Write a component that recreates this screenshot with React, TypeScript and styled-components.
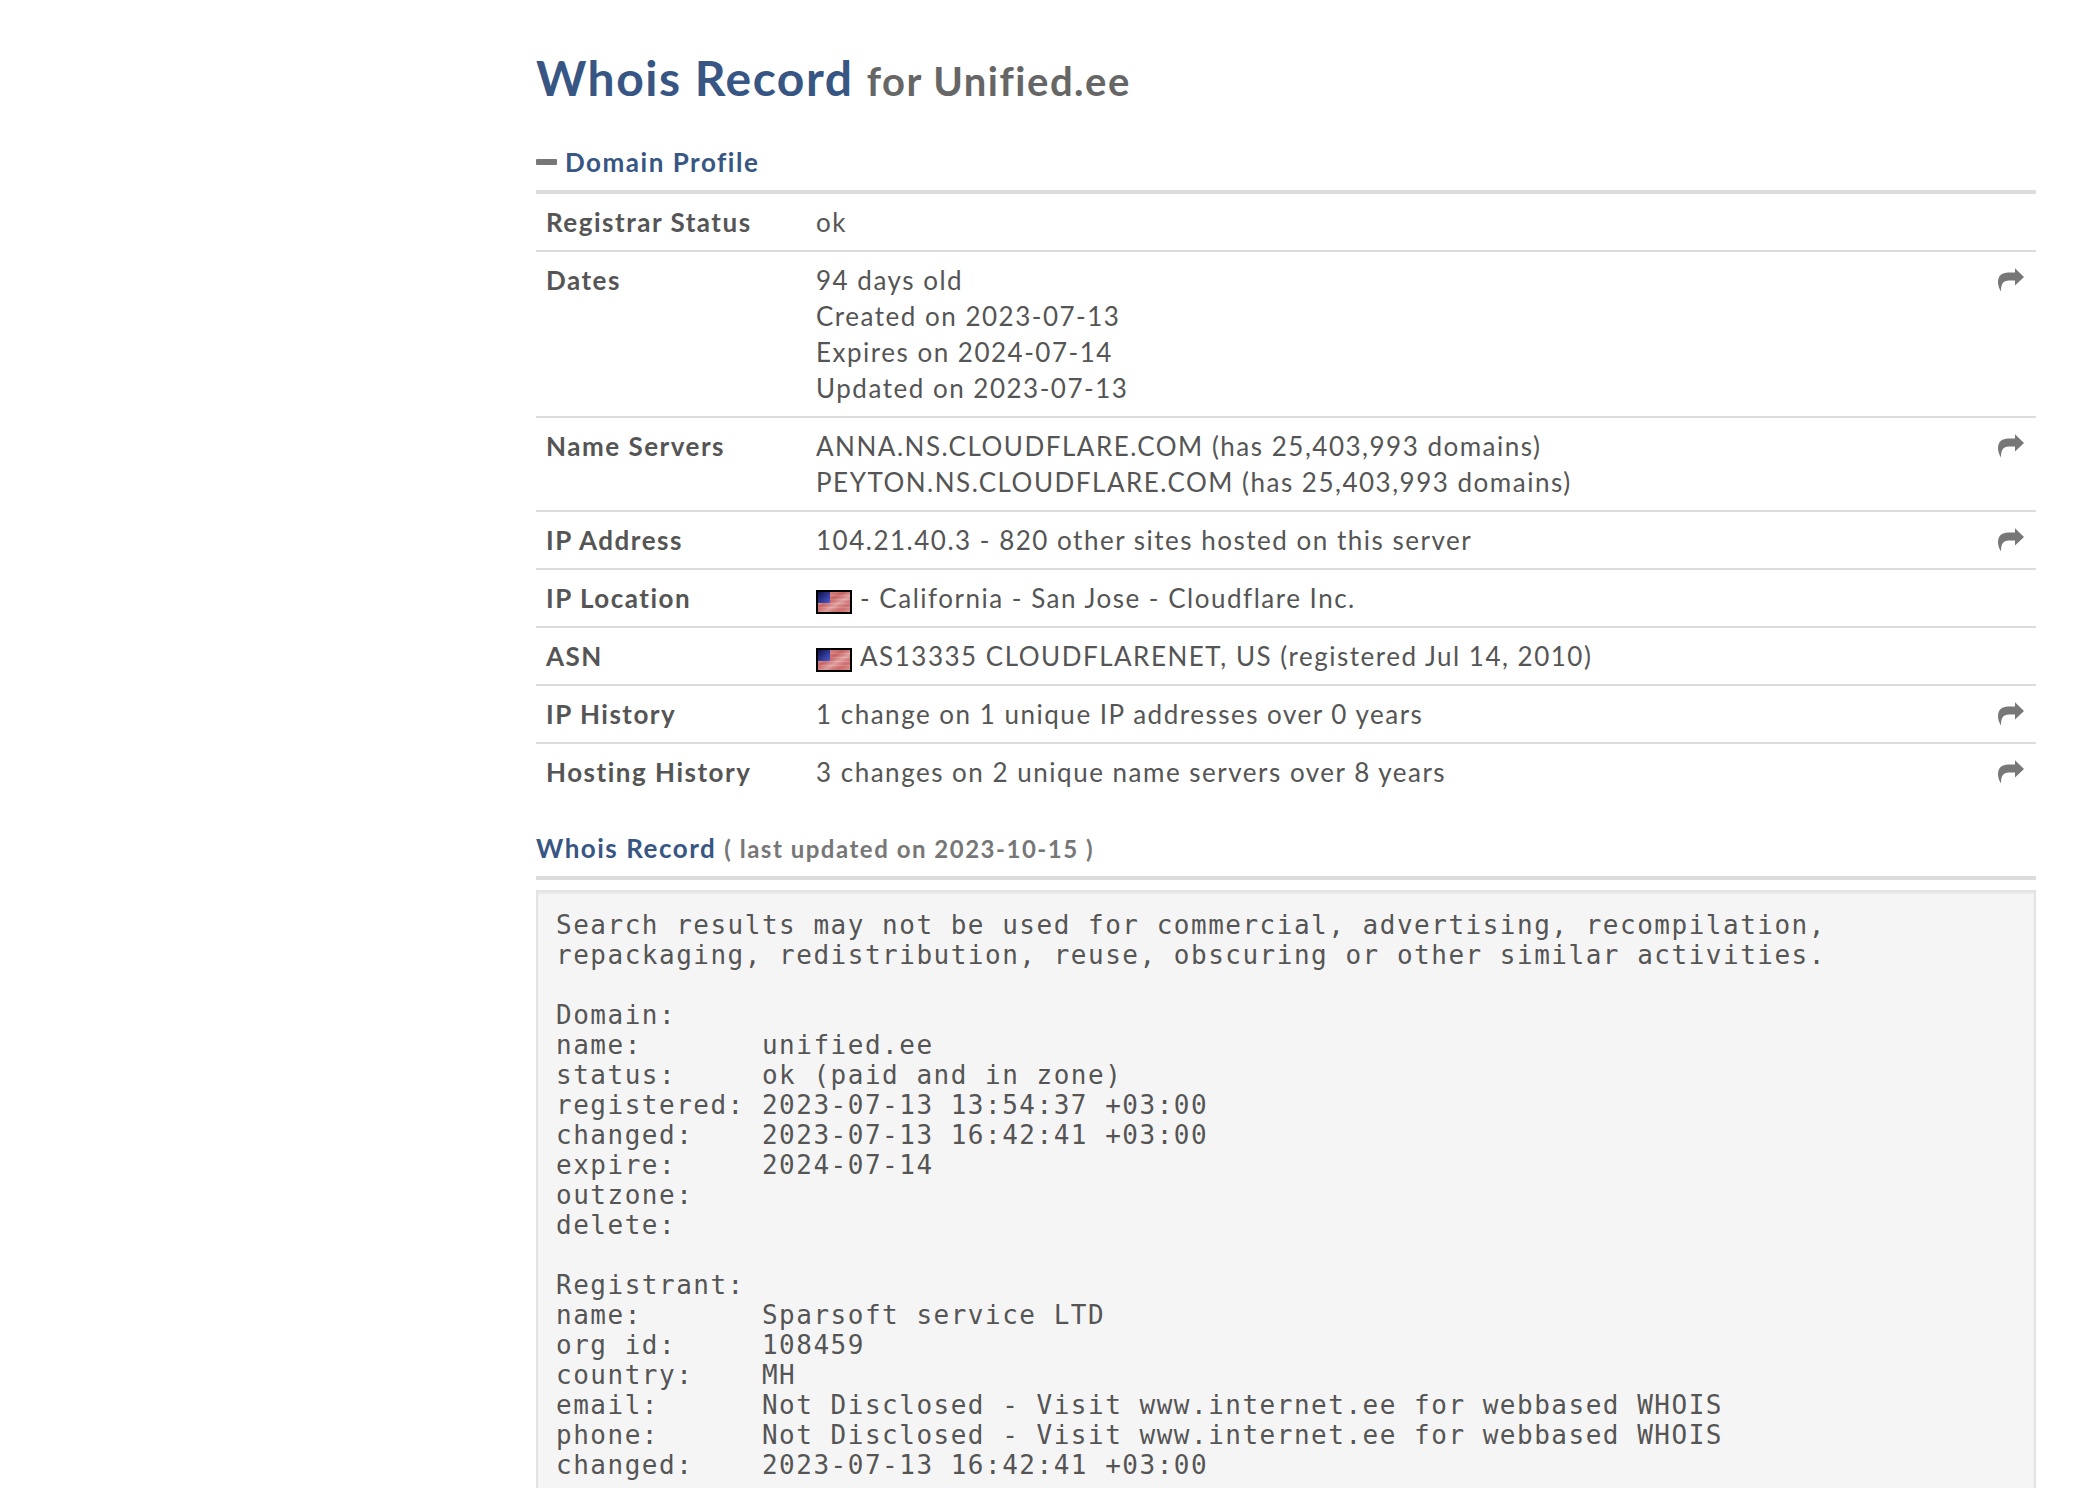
import React from "react";
import styled, { createGlobalStyle } from "styled-components";

const GlobalStyle = createGlobalStyle`
  *, *::before, *::after { box-sizing: border-box; }
  body {
    margin: 0;
    background: #fff;
    color: #555;
    font: 26px/36px Lato, "Liberation Sans", sans-serif;
    letter-spacing: 0.058em;
  }
`;

const Page = styled.div`
  display: grid;
  grid-template-columns: 480px minmax(0, 1fr);
  height: 100vh;
  overflow: hidden;
`;

const Main = styled.main`
  grid-column: 2;
  padding: 46px 56px 0;
`;

const Title = styled.h1`
  margin: 0 0 34px;
  color: #375683;
  font-size: 48px;
  line-height: 64px;
`;

const TitleNote = styled.small`
  color: #666;
  font-size: 40px;
  line-height: 1;
`;

const SectionTitle = styled.h2`
  display: flex;
  align-items: baseline;
  gap: 8px;
  margin: 0;
  padding-bottom: 10px;
  border-bottom: 4px solid #dcdcdc;
  color: #375683;
  font-size: 26px;
  line-height: 36px;
`;

const SectionNote = styled.small`
  color: #777;
  font-size: 24px;
  line-height: 1;
`;

const Toggle = styled.button`
  display: flex;
  align-items: center;
  gap: 8px;
  padding: 0;
  border: 0;
  background: none;
  color: inherit;
  font: inherit;
  letter-spacing: inherit;
`;

const Dash = styled.span`
  width: 21px;
  height: 6px;
  border-radius: 1px;
  background: #777;
`;

const Profile = styled.table`
  width: 100%;
  margin-bottom: 30px;
  border-collapse: separate;
  border-spacing: 0;
  table-layout: fixed;

  tr + tr > * { border-top: 2px solid #dcdcdc; }
`;

const Label = styled.th`
  width: 270px;
  padding: 10px;
  text-align: left;
  vertical-align: top;
`;

const Value = styled.td`
  padding: 10px;
  vertical-align: top;
`;

const Action = styled.td`
  width: 60px;
  padding: 10px;
  vertical-align: top;
`;

const ShareLink = styled.a`
  display: flex;
  justify-content: flex-end;
  align-items: center;
  height: 36px;
  color: #777;
`;

const FlagIcon = styled.svg`
  display: inline-block;
  width: 36px;
  height: 24px;
  margin-right: 8px;
  vertical-align: -6px;
`;

const Record = styled.pre`
  margin: 10px 0 0;
  padding: 18px;
  border: 2px solid #e3e3e3;
  background: #f5f5f5;
  box-shadow: inset 0 2px 2px rgba(0, 0, 0, 0.05);
  font: 26px/30px "DejaVu Sans Mono", monospace;
  white-space: pre-wrap;
`;

const ShareIcon = () => (
  <svg width="28" height="26" viewBox="1 0 28 26" fill="currentColor" aria-hidden="true">
    <path d="M18 1.2 27 10 18 18.6V13.6H12C6 13.6 4 17 4 24.4 2.4 22 1 18.5 1 15.5 1 8 5.5 6 11 5.6H18Z" />
  </svg>
);

const Flag = () => (
  <FlagIcon viewBox="0 0 36 24" role="img" aria-label="US">
    <defs>
      <linearGradient id="sheen" x1="0" y1="0" x2="1" y2="1">
        <stop offset="0" stopColor="#fff" stopOpacity="0" />
        <stop offset="0.4" stopColor="#911" stopOpacity="0.25" />
        <stop offset="0.6" stopColor="#fff" stopOpacity="0.25" />
        <stop offset="0.8" stopColor="#911" stopOpacity="0.15" />
        <stop offset="1" stopColor="#fff" stopOpacity="0.2" />
      </linearGradient>
      <linearGradient id="canton" x1="0" y1="0" x2="1" y2="1">
        <stop offset="0" stopColor="#10104a" />
        <stop offset="1" stopColor="#4a5cd0" />
      </linearGradient>
    </defs>
    <rect width="36" height="24" fill="#000" />
    <rect x="2" y="2" width="32" height="20" fill="#d47c7c" />
    <path d="M2 5.5H34M2 9.5H34M2 13.5H34M2 17.5H34" stroke="#e09898" strokeWidth="1.5" />
    <rect x="2" y="2" width="32" height="20" fill="url(#sheen)" />
    <rect x="2" y="2" width="12" height="11" fill="url(#canton)" />
  </FlagIcon>
);

type Row = { label: string; lines: string[]; flag?: boolean; share?: boolean };

const rows: Row[] = [
  { label: "Registrar Status", lines: ["ok"] },
  {
    label: "Dates",
    lines: ["94 days old", "Created on 2023-07-13", "Expires on 2024-07-14", "Updated on 2023-07-13"],
    share: true,
  },
  {
    label: "Name Servers",
    lines: [
      "ANNA.NS.CLOUDFLARE.COM (has 25,403,993 domains)",
      "PEYTON.NS.CLOUDFLARE.COM (has 25,403,993 domains)",
    ],
    share: true,
  },
  { label: "IP Address", lines: ["104.21.40.3 - 820 other sites hosted on this server"], share: true },
  { label: "IP Location", lines: ["- California - San Jose - Cloudflare Inc."], flag: true },
  { label: "ASN", lines: ["AS13335 CLOUDFLARENET, US (registered Jul 14, 2010)"], flag: true },
  { label: "IP History", lines: ["1 change on 1 unique IP addresses over 0 years"], share: true },
  { label: "Hosting History", lines: ["3 changes on 2 unique name servers over 8 years"], share: true },
];

const record = `Search results may not be used for commercial, advertising, recompilation,
repackaging, redistribution, reuse, obscuring or other similar activities.

Domain:
name:       unified.ee
status:     ok (paid and in zone)
registered: 2023-07-13 13:54:37 +03:00
changed:    2023-07-13 16:42:41 +03:00
expire:     2024-07-14
outzone:
delete:

Registrant:
name:       Sparsoft service LTD
org id:     108459
country:    MH
email:      Not Disclosed - Visit www.internet.ee for webbased WHOIS
phone:      Not Disclosed - Visit www.internet.ee for webbased WHOIS
changed:    2023-07-13 16:42:41 +03:00`;

export default function App() {
  return (
    <>
      <GlobalStyle />
      <Page>
        <Main>
          <Title>
            Whois Record <TitleNote>for Unified.ee</TitleNote>
          </Title>
          <SectionTitle>
            <Toggle type="button" aria-expanded="true">
              <Dash />
              Domain Profile
            </Toggle>
          </SectionTitle>
          <Profile>
            <tbody>
              {rows.map((row) => (
                <tr key={row.label}>
                  <Label scope="row">{row.label}</Label>
                  <Value>
                    {row.lines.map((line) => (
                      <div key={line}>
                        {row.flag && <Flag />}
                        {line}
                      </div>
                    ))}
                  </Value>
                  <Action>
                    {row.share && (
                      <ShareLink href="#" aria-label={`${row.label} details`}>
                        <ShareIcon />
                      </ShareLink>
                    )}
                  </Action>
                </tr>
              ))}
            </tbody>
          </Profile>
          <SectionTitle>
            Whois Record <SectionNote>( last updated on 2023-10-15 )</SectionNote>
          </SectionTitle>
          <Record>{record}</Record>
        </Main>
      </Page>
    </>
  );
}
